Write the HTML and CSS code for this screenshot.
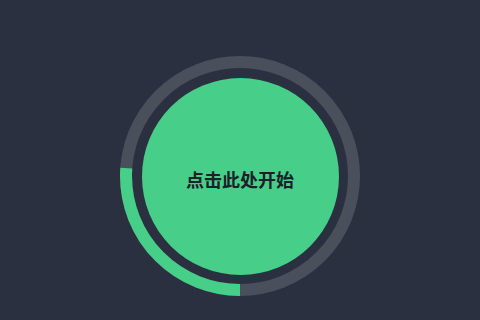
FILE: index.html
```html
<!DOCTYPE html>
<html lang="zh-CN">
<head>
    <meta charset="UTF-8">
    <meta name="viewport" content="width=device-width, initial-scale=1.0">
    <title>开始</title>
    <link rel="stylesheet" href="styles.css">
</head>
<body>
    <div class="timer">
        <svg class="ring" width="240" height="240" viewBox="0 0 240 240">
            <circle class="ring-track" cx="120" cy="120" r="114"></circle>
            <circle class="ring-progress" cx="120" cy="120" r="114" transform="rotate(90 120 120)"></circle>
        </svg>
        <button class="btn-start" type="button">点击此处开始</button>
    </div>
</body>
</html>
```

FILE: styles.css
```css
body {
    font-family: "Noto Sans CJK SC", "Noto Sans", sans-serif;
    background-color: #2a303f;
    margin: 0;
    padding: 56px 0 0;
    display: flex;
    justify-content: center;
    height: 320px;
    box-sizing: border-box;
    overflow: hidden;
}
.timer {
    display: grid;
    place-items: center;
    width: 240px;
    height: 240px;
}
.ring,
.btn-start {
    grid-area: 1 / 1;
}
.ring-track {
    fill: none;
    stroke: #4a4f5c;
    stroke-width: 12;
}
.ring-progress {
    fill: none;
    stroke: #47ce88;
    stroke-width: 12;
    stroke-dasharray: 187 716;
}
.btn-start {
    width: 197px;
    height: 197px;
    border: none;
    border-radius: 50%;
    background-color: #47ce88;
    color: #1b2029;
    font-family: inherit;
    font-size: 18px;
    font-weight: bold;
    padding: 6px 0 0;
    cursor: pointer;
}
```
